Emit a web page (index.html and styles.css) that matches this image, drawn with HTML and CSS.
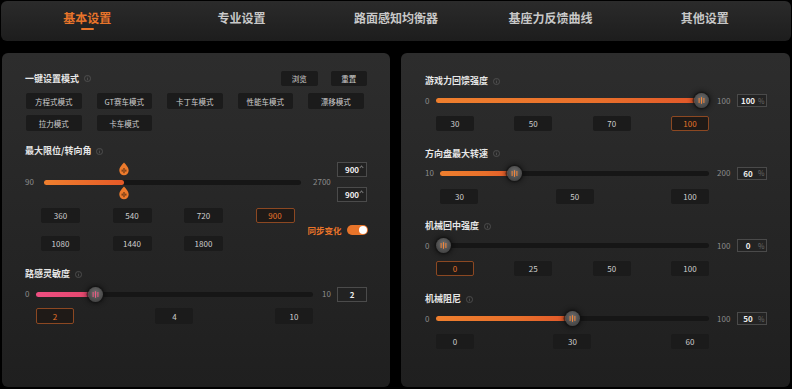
FILE: index.html
```html
<!DOCTYPE html>
<html lang="zh-CN">
<head>
<meta charset="utf-8">
<title>基本设置</title>
<link rel="stylesheet" href="styles.css">
</head>
<body>
<div class="app">
  <nav class="nav">
    <div class="tab tab-active"><span class="tab-label">基本设置</span><span class="tab-bar"></span></div>
    <div class="tab"><span class="tab-label">专业设置</span></div>
    <div class="tab"><span class="tab-label">路面感知均衡器</span></div>
    <div class="tab"><span class="tab-label">基座力反馈曲线</span></div>
    <div class="tab"><span class="tab-label">其他设置</span></div>
  </nav>

  <main class="main">
    <section class="panel panel-left">
      <div class="head-row">
        <div class="title">一键设置模式<svg class="info" viewBox="0 0 8 8"><circle cx="4" cy="4" r="3.5" fill="none" stroke="#5c5c5c" stroke-width="0.8"/><rect x="3.6" y="3.4" width="0.8" height="2.6" fill="#5c5c5c"/><rect x="3.6" y="1.9" width="0.8" height="0.8" fill="#5c5c5c"/></svg></div>
        <div class="head-btns"><div class="btn btn-head">浏览</div><div class="btn btn-head">重置</div></div>
      </div>
      <div class="mode-grid">
        <div class="btn">方程式模式</div>
        <div class="btn">GT赛车模式</div>
        <div class="btn">卡丁车模式</div>
        <div class="btn">性能车模式</div>
        <div class="btn">漂移模式</div>
        <div class="btn">拉力模式</div>
        <div class="btn">卡车模式</div>
      </div>

      <div class="title title-steer">最大限位/转向角<svg class="info" viewBox="0 0 8 8"><circle cx="4" cy="4" r="3.5" fill="none" stroke="#5c5c5c" stroke-width="0.8"/><rect x="3.6" y="3.4" width="0.8" height="2.6" fill="#5c5c5c"/><rect x="3.6" y="1.9" width="0.8" height="0.8" fill="#5c5c5c"/></svg></div>
      <div class="steer">
        <span class="lab lab-90">90</span>
        <div class="steer-track">
          <div class="track"><div class="fill fill-steer" style="width:31%"></div></div>
          <svg class="drop drop-top" style="left:31%" viewBox="0 0 10 14"><path d="M5 0.6C6.6 2.6 9.7 5 9.7 8.6A4.7 4.7 0 0 1 0.3 8.6C0.3 5 3.4 2.6 5 0.6Z" fill="#ec7a2c"/><rect x="2.7" y="7.6" width="0.9" height="2" fill="#3a1e0c"/><rect x="4.55" y="6" width="0.9" height="5.2" fill="#3a1e0c"/><rect x="6.4" y="7.6" width="0.9" height="2" fill="#3a1e0c"/></svg>
          <svg class="drop drop-bot" style="left:31%" viewBox="0 0 10 14"><path d="M5 0.6C6.6 2.6 9.7 5 9.7 8.6A4.7 4.7 0 0 1 0.3 8.6C0.3 5 3.4 2.6 5 0.6Z" fill="#ec7a2c"/><rect x="2.7" y="7.6" width="0.9" height="2" fill="#3a1e0c"/><rect x="4.55" y="6" width="0.9" height="5.2" fill="#3a1e0c"/><rect x="6.4" y="7.6" width="0.9" height="2" fill="#3a1e0c"/></svg>
        </div>
        <span class="lab lab-2700">2700</span>
        <div class="steer-inputs">
          <div class="num-box">900<span class="caret"></span></div>
          <div class="num-box">900<span class="caret"></span></div>
        </div>
      </div>
      <div class="preset-grid">
        <div class="btn btn-num">360</div>
        <div class="btn btn-num">540</div>
        <div class="btn btn-num">720</div>
        <div class="btn btn-num btn-active">900</div>
        <div class="sync">同步变化<span class="toggle"></span></div>
        <div class="btn btn-num">1080</div>
        <div class="btn btn-num">1440</div>
        <div class="btn btn-num">1800</div>
      </div>

      <div class="title title-road">路感灵敏度<svg class="info" viewBox="0 0 8 8"><circle cx="4" cy="4" r="3.5" fill="none" stroke="#5c5c5c" stroke-width="0.8"/><rect x="3.6" y="3.4" width="0.8" height="2.6" fill="#5c5c5c"/><rect x="3.6" y="1.9" width="0.8" height="0.8" fill="#5c5c5c"/></svg></div>
      <div class="ctrl ctrl-left">
        <span class="lab ctrl-lab">0</span>
        <div class="slider">
          <div class="track"><div class="fill fill-pink" style="width:calc((100% - 15px) * 0.2 + 7.5px)"></div></div>
          <span class="thumb thumb-pink" style="left:calc((100% - 15px) * 0.2)"><svg viewBox="0 0 15 15"><rect x="4.6" y="5" width="1" height="5"/><rect x="7" y="4.2" width="1" height="6.6"/><rect x="9.4" y="5" width="1" height="5"/></svg></span>
        </div>
        <span class="lab ctrl-rlab">10</span>
        <div class="num-box">2</div>
        <div class="ctrl-btns">
          <div class="btn btn-num btn-active">2</div>
          <div class="btn btn-num">4</div>
          <div class="btn btn-num">10</div>
        </div>
      </div>
    </section>

    <section class="panel panel-right">
      <div class="group">
        <div class="title">游戏力回馈强度<svg class="info" viewBox="0 0 8 8"><circle cx="4" cy="4" r="3.5" fill="none" stroke="#5c5c5c" stroke-width="0.8"/><rect x="3.6" y="3.4" width="0.8" height="2.6" fill="#5c5c5c"/><rect x="3.6" y="1.9" width="0.8" height="0.8" fill="#5c5c5c"/></svg></div>
        <div class="ctrl ctrl-right">
          <span class="lab ctrl-lab">0</span>
          <div class="slider">
            <div class="track"><div class="fill fill-orange" style="width:calc((100% - 15px) * 1 + 7.5px)"></div></div>
            <span class="thumb" style="left:calc((100% - 15px) * 1)"><svg viewBox="0 0 15 15"><rect x="4.6" y="5" width="1" height="5"/><rect x="7" y="4.2" width="1" height="6.6"/><rect x="9.4" y="5" width="1" height="5"/></svg></span>
          </div>
          <span class="lab ctrl-rlab">100</span>
          <div class="pct-box"><span class="pct-num">100</span><span class="pct-sign">%</span></div>
          <div class="ctrl-btns">
            <div class="btn btn-num">30</div>
            <div class="btn btn-num">50</div>
            <div class="btn btn-num">70</div>
            <div class="btn btn-num btn-active">100</div>
          </div>
        </div>
      </div>

      <div class="group">
        <div class="title">方向盘最大转速<svg class="info" viewBox="0 0 8 8"><circle cx="4" cy="4" r="3.5" fill="none" stroke="#5c5c5c" stroke-width="0.8"/><rect x="3.6" y="3.4" width="0.8" height="2.6" fill="#5c5c5c"/><rect x="3.6" y="1.9" width="0.8" height="0.8" fill="#5c5c5c"/></svg></div>
        <div class="ctrl ctrl-right">
          <span class="lab ctrl-lab">10</span>
          <div class="slider">
            <div class="track"><div class="fill fill-orange" style="width:calc((100% - 15px) * 0.263 + 7.5px)"></div></div>
            <span class="thumb" style="left:calc((100% - 15px) * 0.263)"><svg viewBox="0 0 15 15"><rect x="4.6" y="5" width="1" height="5"/><rect x="7" y="4.2" width="1" height="6.6"/><rect x="9.4" y="5" width="1" height="5"/></svg></span>
          </div>
          <span class="lab ctrl-rlab">200</span>
          <div class="pct-box"><span class="pct-num">60</span><span class="pct-sign">%</span></div>
          <div class="ctrl-btns">
            <div class="btn btn-num">30</div>
            <div class="btn btn-num">50</div>
            <div class="btn btn-num">100</div>
          </div>
        </div>
      </div>

      <div class="group">
        <div class="title">机械回中强度<svg class="info" viewBox="0 0 8 8"><circle cx="4" cy="4" r="3.5" fill="none" stroke="#5c5c5c" stroke-width="0.8"/><rect x="3.6" y="3.4" width="0.8" height="2.6" fill="#5c5c5c"/><rect x="3.6" y="1.9" width="0.8" height="0.8" fill="#5c5c5c"/></svg></div>
        <div class="ctrl ctrl-right">
          <span class="lab ctrl-lab">0</span>
          <div class="slider">
            <div class="track"></div>
            <span class="thumb" style="left:0"><svg viewBox="0 0 15 15"><rect x="4.6" y="5" width="1" height="5"/><rect x="7" y="4.2" width="1" height="6.6"/><rect x="9.4" y="5" width="1" height="5"/></svg></span>
          </div>
          <span class="lab ctrl-rlab">100</span>
          <div class="pct-box"><span class="pct-num">0</span><span class="pct-sign">%</span></div>
          <div class="ctrl-btns">
            <div class="btn btn-num btn-active">0</div>
            <div class="btn btn-num">25</div>
            <div class="btn btn-num">50</div>
            <div class="btn btn-num">100</div>
          </div>
        </div>
      </div>

      <div class="group">
        <div class="title">机械阻尼<svg class="info" viewBox="0 0 8 8"><circle cx="4" cy="4" r="3.5" fill="none" stroke="#5c5c5c" stroke-width="0.8"/><rect x="3.6" y="3.4" width="0.8" height="2.6" fill="#5c5c5c"/><rect x="3.6" y="1.9" width="0.8" height="0.8" fill="#5c5c5c"/></svg></div>
        <div class="ctrl ctrl-right">
          <span class="lab ctrl-lab">0</span>
          <div class="slider">
            <div class="track"><div class="fill fill-orange" style="width:calc((100% - 15px) * 0.5 + 7.5px)"></div></div>
            <span class="thumb" style="left:calc((100% - 15px) * 0.5)"><svg viewBox="0 0 15 15"><rect x="4.6" y="5" width="1" height="5"/><rect x="7" y="4.2" width="1" height="6.6"/><rect x="9.4" y="5" width="1" height="5"/></svg></span>
          </div>
          <span class="lab ctrl-rlab">100</span>
          <div class="pct-box"><span class="pct-num">50</span><span class="pct-sign">%</span></div>
          <div class="ctrl-btns">
            <div class="btn btn-num">0</div>
            <div class="btn btn-num">30</div>
            <div class="btn btn-num">60</div>
          </div>
        </div>
      </div>
    </section>
  </main>
</div>
</body>
</html>
```

FILE: styles.css
```css
html, body {
  margin: 0;
  padding: 0;
}
body {
  background: #000;
  width: 792px;
  height: 389px;
  overflow: hidden;
  font-family: "Noto Sans CJK SC", "Noto Sans", "Liberation Sans", sans-serif;
}
.app {
  padding: 1px;
}

/* top navigation */
.nav {
  height: 40px;
  border-radius: 6px;
  background: linear-gradient(180deg, #2b2b2b 0%, #1d1d1d 100%);
  display: grid;
  grid-template-columns: repeat(5, 1fr);
  padding: 0 9px;
}
.tab {
  display: flex;
  flex-direction: column;
  align-items: center;
  padding-top: 10px;
}
.tab-label {
  font-size: 12px;
  line-height: 14px;
  font-weight: 700;
  color: #c8c8c8;
  white-space: nowrap;
}
.tab-active .tab-label {
  color: #e8742a;
}
.tab-bar {
  width: 13px;
  height: 2px;
  border-radius: 1px;
  background: #e8742a;
  margin-top: 3px;
}

/* panels */
.main {
  display: flex;
  gap: 11px;
  margin-top: 12px;
  padding-left: 1px;
}
.panel {
  height: 334px;
  border-radius: 6px;
  background: linear-gradient(180deg, #2d2d2d 0%, #262626 50%, #1f1f1f 100%);
  box-sizing: border-box;
}
.panel-left {
  width: 388px;
  padding: 18px 23px 0 23px;
}
.panel-right {
  width: 389px;
  padding: 22px 23px 0 24px;
}

.title {
  font-size: 9px;
  line-height: 12px;
  font-weight: 700;
  color: #e6e6e6;
  display: flex;
  align-items: center;
  white-space: nowrap;
}
.info {
  width: 7px;
  height: 7px;
  margin-left: 5px;
}

/* buttons */
.btn {
  height: 15px;
  border-radius: 2px;
  background: #1b1b1b;
  color: #cfcfcf;
  font-size: 7.5px;
  display: flex;
  align-items: center;
  justify-content: center;
  box-sizing: border-box;
  white-space: nowrap;
}
.btn-num {
  font-size: 8px;
  width: 38px;
}
.btn-active {
  border: 1px solid #8c4822;
  background: #1f1a17;
  color: #e8742a;
}

.head-row {
  display: flex;
  justify-content: space-between;
  align-items: center;
  height: 15px;
}
.head-btns {
  display: flex;
  gap: 13px;
}
.btn-head {
  width: 36.5px;
}

.mode-grid {
  display: grid;
  grid-template-columns: repeat(5, 55.5px);
  grid-auto-rows: 16px;
  column-gap: 15px;
  row-gap: 6px;
  margin: 7px 0 0 1px;
}
.mode-grid .btn {
  height: 16px;
}

/* steering angle */
.title-steer {
  margin-top: 14px;
}
.steer {
  display: flex;
  align-items: center;
  height: 40px;
  margin-top: 5px;
}
.lab {
  font-size: 8px;
  line-height: 10px;
  color: #8c8c8c;
  white-space: nowrap;
}
.lab-90 {
  margin-right: 10px;
}
.lab-2700 {
  margin-left: 12px;
  width: 24px;
}
.steer-track {
  flex: 1;
  position: relative;
  height: 40px;
  display: flex;
  align-items: center;
}
.steer-inputs {
  width: 30px;
  display: flex;
  flex-direction: column;
  gap: 10px;
}
.num-box {
  width: 30px;
  height: 15px;
  border: 1px solid #4b4b4b;
  box-sizing: border-box;
  background: #222;
  font-size: 8px;
  font-weight: 700;
  color: #eeeeee;
  display: flex;
  align-items: center;
  justify-content: center;
  position: relative;
}
.caret {
  position: absolute;
  right: 3px;
  top: 3px;
  width: 2px;
  height: 2px;
  border-left: 1px solid #777;
  border-top: 1px solid #777;
  transform: rotate(45deg);
}
.drop {
  position: absolute;
  width: 10px;
  height: 14px;
  transform: translateX(-50%);
}
.drop-top {
  top: 0;
}
.drop-bot {
  top: 24px;
}

.track {
  width: 100%;
  height: 5px;
  border-radius: 3px;
  background: #161616;
  position: relative;
}
.fill {
  height: 100%;
  border-radius: 3px;
}
.fill-steer {
  background: linear-gradient(90deg, #ef7f2e 0%, #e65a28 100%);
}
.fill-orange {
  background: linear-gradient(90deg, #ef7f2e 0%, #e9702b 60%, #e2572a 100%);
}
.fill-pink {
  background: linear-gradient(90deg, #ee4f82 0%, #e4476b 100%);
}

.preset-grid {
  display: grid;
  grid-template-columns: 71.5px 71.5px 71.5px 52px 1fr;
  grid-auto-rows: 15px;
  row-gap: 13px;
  margin: 6px 0 0 16px;
}
.preset-grid .btn {
  width: 39px;
}
.sync {
  grid-column: 5;
  grid-row: 1 / span 2;
  align-self: center;
  justify-self: end;
  display: flex;
  align-items: center;
  gap: 5px;
  color: #e8742a;
  font-size: 8.5px;
  font-weight: 700;
  white-space: nowrap;
}
.toggle {
  width: 21px;
  height: 10px;
  border-radius: 5px;
  background: #e8742a;
  position: relative;
}
.toggle::after {
  content: "";
  position: absolute;
  right: 1px;
  top: 1px;
  width: 8px;
  height: 8px;
  border-radius: 50%;
  background: #fff;
}

/* generic slider control */
.title-road {
  margin-top: 17px;
}
.ctrl {
  display: grid;
  grid-template-columns: auto 1fr auto auto;
  align-items: center;
}
.ctrl-left {
  margin-top: 6.5px;
}
.ctrl-right {
  margin-top: 6px;
}
.ctrl-lab {
  margin-right: 6.5px;
}
.ctrl-left .ctrl-rlab {
  margin-left: 9px;
  width: 15px;
}
.ctrl-right .ctrl-rlab {
  margin-left: 8px;
  width: 20px;
}
.slider {
  position: relative;
  height: 15px;
  display: flex;
  align-items: center;
}
.thumb {
  position: absolute;
  top: 0;
  width: 15px;
  height: 15px;
  border-radius: 50%;
  background: radial-gradient(circle at 50% 40%, #6f6f6f 0%, #4e4e4e 55%, #3a3a3a 100%);
  box-shadow: 0 0 0 1.5px rgba(20, 20, 20, 0.55), 0 0 5px 2px rgba(0, 0, 0, 0.45);
}
.thumb svg {
  display: block;
  width: 15px;
  height: 15px;
  fill: #f3863a;
}
.thumb-pink svg {
  fill: #ef5a84;
}
.ctrl-btns {
  grid-column: 2;
  display: flex;
  justify-content: space-between;
}
.ctrl-left .ctrl-btns {
  margin-top: 6.5px;
}
.ctrl-left .ctrl-btns .btn {
  height: 16px;
}
.ctrl-right .ctrl-btns {
  margin-top: 8px;
}

.group {
  margin-bottom: 16.7px;
}
.pct-box {
  width: 30px;
  height: 13px;
  border: 1px solid #4a4a4a;
  box-sizing: border-box;
  background: #232323;
  display: flex;
  align-items: center;
  font-size: 8px;
}
.pct-num {
  width: 18px;
  margin-left: 1px;
  text-align: center;
  font-weight: 700;
  color: #eeeeee;
}
.pct-sign {
  margin-left: 1px;
  font-size: 7px;
  color: #6a6a6a;
}
```
